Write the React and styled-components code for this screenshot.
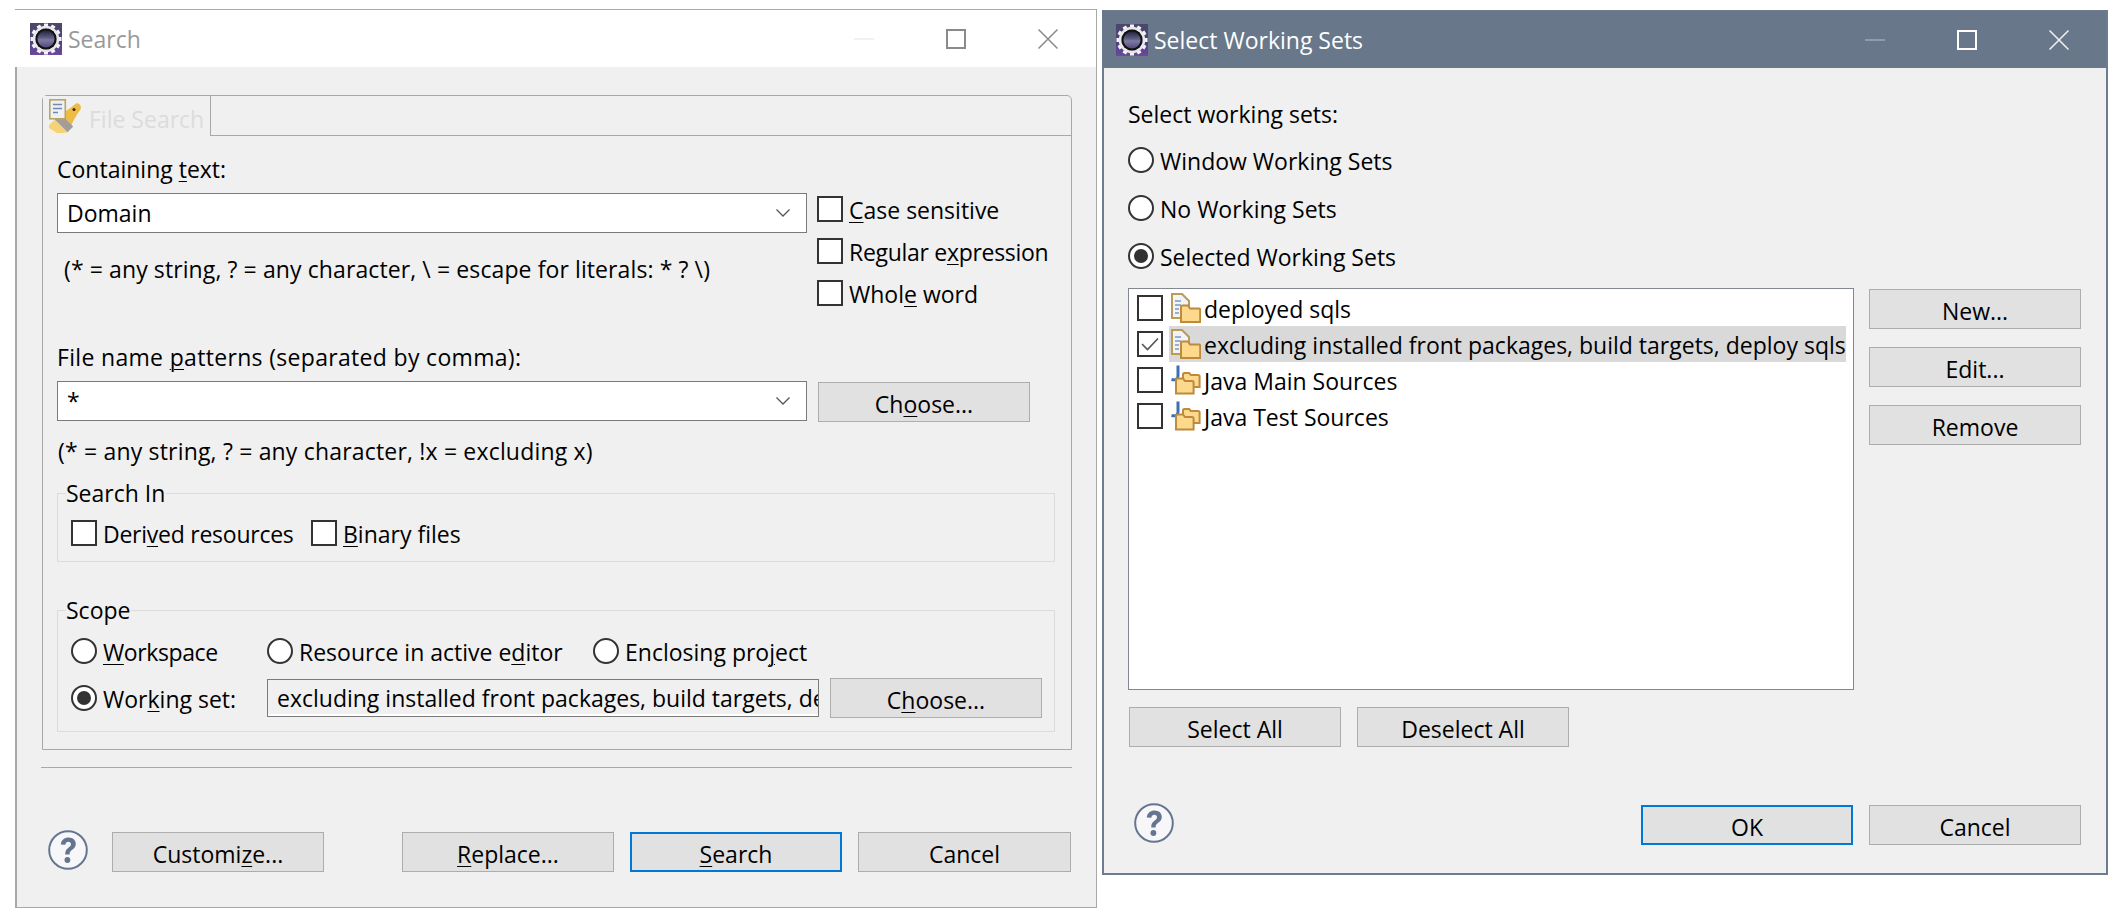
import React from "react";
import styled, { createGlobalStyle, css } from "styled-components";

const Global = createGlobalStyle`
  html, body { margin: 0; padding: 0; background: #fff; }
  body { font-family: "Open Sans", "Noto Sans", "Liberation Sans", sans-serif; font-size: 23px; color: #000; }
`;

const Page = styled.div`
  display: flex;
  align-items: flex-start;
  gap: 5px;
  padding: 9px 0 0 15px;
  width: 2114px;
  height: 924px;
  box-sizing: border-box;
  overflow: hidden;
`;

const Dialog = styled.div`
  background: #f0f0f0;
  box-sizing: border-box;
  width: ${(p) => p.$w}px;
  height: ${(p) => p.$h}px;
  margin-top: ${(p) => p.$top || 0}px;
  border: ${(p) => (p.$active ? "2px solid #6e7c8f" : "1px solid #a8a8a8")};
  border-left-width: 2px;
  border-top-width: 1px;
  display: flex;
  flex-direction: column;
`;

const TitleBar = styled.div`
  height: 57px;
  flex: none;
  display: flex;
  align-items: center;
  padding-right: ${(p) => (p.$active ? 37 : 38)}px;
  padding-left: ${(p) => (p.$active ? 14 : 15)}px;
  margin-left: -2px;
  background: ${(p) => (p.$active ? "#68778a" : "#fff")};
  color: ${(p) => (p.$active ? "#fff" : "#999")};
`;

const TitleText = styled.div`
  margin-left: 6px;
  flex: 1;
  line-height: 32px;
`;

const WinControls = styled.div`
  display: grid;
  grid-template-columns: 20px 20px 20px;
  column-gap: 72px;
  align-items: center;
`;

const Body = styled.div`
  flex: 1;
  display: flex;
  flex-direction: column;
  padding-left: ${(p) => p.$pl}px;
  padding-top: ${(p) => p.$pt || 0}px;
`;

const Folder = styled.div`
  width: 1030px;
  box-sizing: border-box;
  border: 1px solid #a8a8a8;
  border-radius: 5px 5px 0 0;
  margin-top: 28px;
`;

const TabStrip = styled.div`
  height: 39px;
  border-bottom: 1px solid #a8a8a8;
  display: flex;
`;

const Tab = styled.div`
  width: 168px;
  height: 40px;
  box-sizing: border-box;
  background: #f0f0f0;
  border-right: 1px solid #a8a8a8;
  display: flex;
  align-items: center;
  padding-left: 6px;
  gap: 8px;
  color: #dcdcdc;
  white-space: nowrap;
  overflow: hidden;
`;

const TabLabel = styled.span`
  padding-top: 5px;
  line-height: 32px;
`;

const TabBody = styled.div`
  padding: 17px 0 17px 14px;
`;

const TextLabel = styled.div`
  height: 32px;
  line-height: 32px;
  white-space: nowrap;
  letter-spacing: ${(p) => p.$ls || 0}px;
  margin-top: ${(p) => p.$mt || 0}px;
  padding-left: ${(p) => p.$pl || 0}px;
`;

const M = styled.span`
  text-decoration: underline;
  text-underline-offset: 3px;
  text-decoration-thickness: 1px;
`;

const TopRow = styled.div`
  display: flex;
  gap: 10px;
  margin-top: 8px;
`;

const LeftCol = styled.div`
  width: 750px;
`;

const CheckCol = styled.div`
  display: flex;
  flex-direction: column;
  gap: 16px;
  padding-top: 3px;
`;

const Combo = styled.div`
  box-sizing: border-box;
  width: 750px;
  height: 40px;
  flex: none;
  background: #fff;
  border: 1px solid #7a7a7a;
  display: flex;
  align-items: center;
  justify-content: space-between;
  padding: 0 16px 0 9px;
  line-height: 32px;
`;

const PatternRow = styled.div`
  display: flex;
  gap: 11px;
  margin-top: 8px;
`;

const Button = styled.div`
  box-sizing: border-box;
  width: ${(p) => p.$w || 212}px;
  height: 40px;
  flex: none;
  background: #e1e1e1;
  border: 1px solid #adadad;
  display: flex;
  align-items: center;
  justify-content: center;
  padding-top: 3px;
  line-height: 32px;
  margin-top: ${(p) => p.$mt || 0}px;
  ${(p) =>
    p.$default &&
    css`
      border: 2px solid #0078d7;
    `}
`;

const Group = styled.fieldset`
  width: 998px;
  box-sizing: border-box;
  margin: ${(p) => p.$mt}px 0 0 0;
  padding: 0;
  min-width: 0;
  border: 1px solid #dcdcdc;
`;

const GroupTitle = styled.legend`
  margin-left: 8px;
  padding: 0 1px 0 0;
  height: 32px;
  line-height: 32px;
`;

const GroupRow = styled.div`
  display: grid;
  align-items: center;
  grid-template-columns: ${(p) => p.$cols};
  column-gap: ${(p) => p.$gap || 0}px;
  padding: ${(p) => p.$pad};
`;

const Option = styled.div`
  display: flex;
  align-items: center;
  height: 26px;
  gap: 6px;
  white-space: nowrap;
`;

const OptionText = styled.span`
  padding-top: 2px;
  line-height: 32px;
  letter-spacing: ${(p) => p.$ls || 0}px;
`;

const Box = styled.span`
  box-sizing: border-box;
  width: 26px;
  height: 26px;
  flex: none;
  background: #fff;
  border: 2px solid #333;
  display: flex;
  align-items: center;
  justify-content: center;
`;

const Radio = styled.span`
  box-sizing: border-box;
  width: 26px;
  height: 26px;
  flex: none;
  background: #fff;
  border: 2px solid #333;
  border-radius: 50%;
  display: flex;
  align-items: center;
  justify-content: center;
  &::after {
    content: "";
    display: ${(p) => (p.$on ? "block" : "none")};
    width: 14px;
    height: 14px;
    border-radius: 50%;
    background: #333;
  }
`;

const ReadOnlyField = styled.div`
  box-sizing: border-box;
  width: 552px;
  height: 38px;
  background: #f0f0f0;
  border: 1px solid #7a7a7a;
  box-shadow: inset 0 -2px 0 #fff;
  padding-left: 9px;
  overflow: hidden;
  white-space: nowrap;
  line-height: 37px;
`;

const Separator = styled.div`
  width: 1031px;
  margin: 17px 0 0 -1px;
  border-top: 1px solid #a8a8a8;
`;

const Footer = styled.div`
  width: ${(p) => p.$w}px;
  margin-top: ${(p) => p.$mt}px;
  margin-left: ${(p) => p.$ml || 0}px;
  display: flex;
  justify-content: space-between;
`;

const ButtonGroup = styled.div`
  display: flex;
  gap: ${(p) => p.$gap}px;
  align-items: flex-start;
  margin-top: ${(p) => p.$mt || 0}px;
  margin-left: ${(p) => p.$ml || 0}px;
`;

const HelpButton = styled.div`
  width: 40px;
  height: 40px;
  margin-left: ${(p) => p.$ml || 0}px;
`;

const RadioStack = styled.div`
  display: flex;
  flex-direction: column;
  gap: 22px;
  margin-top: 17px;
`;

const SetsRow = styled.div`
  display: flex;
  gap: 15px;
  margin-top: 19px;
`;

const SetList = styled.div`
  box-sizing: border-box;
  width: 726px;
  height: 402px;
  background: #fff;
  border: 1px solid #828790;
  padding: 1px 7px 0 8px;
`;

const SetRow = styled.div`
  display: flex;
  align-items: center;
  height: 36px;
  gap: 6px;
`;

const SetCell = styled.div`
  flex: 1;
  height: 36px;
  display: flex;
  align-items: center;
  gap: 3px;
  padding-left: 2px;
  background: ${(p) => (p.$selected ? "#d9d9d9" : "transparent")};
  white-space: nowrap;
`;

const SideButtons = styled.div`
  display: flex;
  flex-direction: column;
  gap: 18px;
  margin-top: 1px;
`;

function EclipseIcon({ id }) {
  const teeth = [0, 30, 60, 90, 120, 150, 180, 210, 240, 270, 300, 330];
  return (
    <svg width="32" height="32" viewBox="0 0 32 32" style={{ flex: "none" }}>
      <defs>
        <linearGradient id={`ecl${id}`} x1="0" y1="0" x2="0" y2="1">
          <stop offset="0" stopColor="#4a4868" />
          <stop offset="0.6" stopColor="#514080" />
          <stop offset="1" stopColor="#6a4a9e" />
        </linearGradient>
        <linearGradient id={`eclc${id}`} x1="0" y1="0" x2="0" y2="1">
          <stop offset="0" stopColor="#23233a" />
          <stop offset="0.45" stopColor="#60608a" />
          <stop offset="0.55" stopColor="#7c7c9e" />
          <stop offset="1" stopColor="#54487e" />
        </linearGradient>
      </defs>
      <rect width="32" height="32" fill={`url(#ecl${id})`} />
      {teeth.map((a) => (
        <rect key={a} x="14" y="0.5" width="4" height="5" fill="#f4f4f4" transform={`rotate(${a} 16 16)`} />
      ))}
      <circle cx="16" cy="16" r="12" fill="none" stroke="#e8e8e8" strokeWidth="2.5" />
      <circle cx="16" cy="16" r="10.5" fill="#111" />
      <circle cx="16" cy="16" r="8.5" fill={`url(#eclc${id})`} />
    </svg>
  );
}

function Minimize({ color }) {
  return (
    <svg width="20" height="20" viewBox="0 0 20 20">
      <rect x="0" y="9" width="20" height="2" fill={color} />
    </svg>
  );
}

function Maximize({ color }) {
  return (
    <svg width="20" height="20" viewBox="0 0 20 20">
      <rect x="1" y="1" width="18" height="18" fill="none" stroke={color} strokeWidth="2" />
    </svg>
  );
}

function CloseX({ color }) {
  return (
    <svg width="20" height="20" viewBox="0 0 20 20">
      <path d="M0.5 0.5 L19.5 19.5 M19.5 0.5 L0.5 19.5" stroke={color} strokeWidth="1.5" fill="none" />
    </svg>
  );
}

function Chevron() {
  return (
    <svg width="14" height="8" viewBox="0 0 14 8">
      <path d="M0.5 0.5 L7 7 L13.5 0.5" stroke="#555" strokeWidth="1.3" fill="none" />
    </svg>
  );
}

function CheckMark() {
  return (
    <svg width="20" height="16" viewBox="0 0 20 16">
      <path d="M2 8 L7.5 13.5 L18 2.5" stroke="#555" strokeWidth="1.6" fill="none" />
    </svg>
  );
}

function HelpIcon() {
  return (
    <svg width="40" height="40" viewBox="0 0 40 40">
      <circle cx="20" cy="20" r="18.8" fill="#f7f7f9" stroke="#65758f" strokeWidth="2" />
      <path
        d="M12.8 14.5 C13.3 9.8 16.6 7.6 20.5 7.6 C25 7.6 27.8 10.4 27.8 14 C27.8 17.2 25.8 18.7 23.6 20.3 C22.2 21.4 21.6 22.2 21.6 24.6 L17.2 24.6 C17.2 21.2 18.1 19.6 20.1 18 C21.9 16.6 23 15.8 23 14.2 C23 12.8 22 11.8 20.3 11.8 C18.7 11.8 17.6 12.9 17.3 14.8 Z"
        fill="#65758f"
      />
      <circle cx="19.4" cy="30" r="2.9" fill="#65758f" />
    </svg>
  );
}

function FileSearchIcon() {
  return (
    <svg width="32" height="34" viewBox="0 0 32 34" style={{ flex: "none" }}>
      <path d="M6 20.4 L0 26 L0 34 L14 34 L18.6 33.2 Z" fill="#f3d27a" />
      <path d="M0 29 L0 34 L8 34 Z" fill="#fbf0cf" />
      <path d="M11 15 C18 12 24 7 27 4.5 C30 3.5 33 7 31.5 10.5 C29 14 25 20 22.5 26 Z" fill="#eebc45" />
      <path d="M5.8 20.4 L11.4 14.8 L24.2 27.6 L18.6 33.2 Z" fill="#a39d95" />
      <circle cx="25" cy="10.5" r="1.5" fill="#3a2a05" />
      <rect x="0.8" y="0.8" width="15.5" height="19" fill="#eef0f4" stroke="#b8a562" strokeWidth="1.6" />
      <path d="M4 5.5 H13 M4 9.5 H13 M4 13.5 H9" stroke="#6f8ab8" strokeWidth="1.6" />
    </svg>
  );
}

function WorkingSetIcon() {
  return (
    <svg width="30" height="30" viewBox="0 0 30 30" style={{ flex: "none" }}>
      <path d="M1 1 H11 L18 8 V25 H1 Z" fill="#f1f3f6" stroke="#b99c58" strokeWidth="2" />
      <path d="M4 8 H10 M4 12 H10 M4 16 H8 M4 20 H8" stroke="#7d98c4" strokeWidth="1.6" />
      <path d="M10 29 V14 C10 13 10.5 12.5 11.5 12.5 H17 L19 15.5 H28 C28.7 15.5 29.2 16 29.2 17 V29 Z" fill="#fcd98c" stroke="#bd8a3e" strokeWidth="2" />
    </svg>
  );
}

function JavaSetIcon() {
  return (
    <svg width="30" height="30" viewBox="0 0 30 30" style={{ flex: "none" }}>
      <path d="M7 0.5 V11 C7 14.5 4.5 15.5 0.5 14.5" stroke="#3f6fb0" strokeWidth="3" fill="none" />
      <path d="M12 16 V9.5 C12 8.5 12.5 8 13.5 8 H18 L20 10 H27 C28 10 28.6 10.6 28.6 11.6 V22 H23" fill="#fcd98c" stroke="#bd8a3e" strokeWidth="2" />
      <path d="M5 28.5 V15 C5 14 5.5 13.5 6.5 13.5 H12 L14 16 H21 C22 16 22.6 16.6 22.6 17.6 V28.5 Z" fill="#fcd98c" stroke="#bd8a3e" strokeWidth="2" />
    </svg>
  );
}

const sets = [
  { name: "deployed sqls", icon: <WorkingSetIcon /> },
  { name: "excluding installed front packages, build targets, deploy sqls", icon: <WorkingSetIcon />, selected: true },
  { name: "Java Main Sources", icon: <JavaSetIcon /> },
  { name: "Java Test Sources", icon: <JavaSetIcon /> },
];

function SearchDialog() {
  return (
    <Dialog $w={1082} $h={899}>
      <TitleBar>
        <EclipseIcon id="a" />
        <TitleText>Search</TitleText>
        <WinControls>
          <Minimize color="#f2f2f2" />
          <Maximize color="#8a8a8a" />
          <CloseX color="#8a8a8a" />
        </WinControls>
      </TitleBar>
      <Body $pl={25}>
        <Folder>
          <TabStrip>
            <Tab>
              <FileSearchIcon />
              <TabLabel>File Search</TabLabel>
            </Tab>
          </TabStrip>
          <TabBody>
            <TextLabel>
              Containing <M>t</M>ext:
            </TextLabel>
            <TopRow>
              <LeftCol>
                <Combo>
                  Domain
                  <Chevron />
                </Combo>
                <TextLabel $mt={20} $pl={7} $ls={0.1}>
                  {"(* = any string, ? = any character, \\ = escape for literals: * ? \\)"}
                </TextLabel>
              </LeftCol>
              <CheckCol>
                <Option>
                  <Box />
                  <OptionText>
                    <M>C</M>ase sensitive
                  </OptionText>
                </Option>
                <Option>
                  <Box />
                  <OptionText $ls={-0.3}>
                    Regular e<M>x</M>pression
                  </OptionText>
                </Option>
                <Option>
                  <Box />
                  <OptionText>
                    Whol<M>e</M> word
                  </OptionText>
                </Option>
              </CheckCol>
            </TopRow>
            <TextLabel $mt={35} $ls={0.32}>
              File name <M>p</M>atterns (separated by comma):
            </TextLabel>
            <PatternRow>
              <Combo>
                *
                <Chevron />
              </Combo>
              <Button $mt={1}>
                <span>
                  Ch<M>o</M>ose...
                </span>
              </Button>
            </PatternRow>
            <TextLabel $mt={13} $pl={1} $ls={0.18}>
              (* = any string, ? = any character, !x = excluding x)
            </TextLabel>
            <Group $mt={10}>
              <GroupTitle>Search In</GroupTitle>
              <GroupRow $cols="240px auto" $pad="11px 0 15px 13px">
                <Option>
                  <Box />
                  <OptionText $ls={-0.25}>
                    Deri<M>v</M>ed resources
                  </OptionText>
                </Option>
                <Option>
                  <Box />
                  <OptionText>
                    <M>B</M>inary files
                  </OptionText>
                </Option>
              </GroupRow>
            </Group>
            <Group $mt={32}>
              <GroupTitle>Scope</GroupTitle>
              <GroupRow $cols="196px 326px auto" $pad="12px 0 0 13px">
                <Option>
                  <Radio />
                  <OptionText $ls={-0.4}>
                    <M>W</M>orkspace
                  </OptionText>
                </Option>
                <Option>
                  <Radio />
                  <OptionText>
                    Resource in active e<M>d</M>itor
                  </OptionText>
                </Option>
                <Option>
                  <Radio />
                  <OptionText>
                    Enclosing pro<M>j</M>ect
                  </OptionText>
                </Option>
              </GroupRow>
              <GroupRow $cols="185px 552px 212px" $gap={11} $pad="14px 0 13px 13px">
                <Option>
                  <Radio $on />
                  <OptionText>
                    Wor<M>k</M>ing set:
                  </OptionText>
                </Option>
                <ReadOnlyField>excluding installed front packages, build targets, deploy sqls</ReadOnlyField>
                <Button>
                  <span>
                    C<M>h</M>oose...
                  </span>
                </Button>
              </GroupRow>
            </Group>
          </TabBody>
        </Folder>
        <Separator />
        <Footer $w={1029} $mt={62}>
          <ButtonGroup $gap={24}>
            <HelpButton $ml={6}>
              <HelpIcon />
            </HelpButton>
            <Button $mt={2}>
              <span>
                Customi<M>z</M>e...
              </span>
            </Button>
          </ButtonGroup>
          <ButtonGroup $gap={16} $mt={2}>
            <Button>
              <span>
                <M>R</M>eplace...
              </span>
            </Button>
            <Button $default>
              <span>
                <M>S</M>earch
              </span>
            </Button>
            <Button $w={213}>Cancel</Button>
          </ButtonGroup>
        </Footer>
      </Body>
    </Dialog>
  );
}

function WorkingSetsDialog() {
  return (
    <Dialog $w={1006} $h={865} $top={1} $active>
      <TitleBar $active>
        <EclipseIcon id="b" />
        <TitleText>Select Working Sets</TitleText>
        <WinControls>
          <Minimize color="#8f9cad" />
          <Maximize color="#fff" />
          <CloseX color="#f2f2f2" />
        </WinControls>
      </TitleBar>
      <Body $pl={24} $pt={30}>
        <TextLabel>Select working sets:</TextLabel>
        <RadioStack>
          <Option>
            <Radio />
            <OptionText>Window Working Sets</OptionText>
          </Option>
          <Option>
            <Radio />
            <OptionText>No Working Sets</OptionText>
          </Option>
          <Option>
            <Radio $on />
            <OptionText>Selected Working Sets</OptionText>
          </Option>
        </RadioStack>
        <SetsRow>
          <SetList>
            {sets.map((s) => (
              <SetRow key={s.name}>
                <Box>{s.selected && <CheckMark />}</Box>
                <SetCell $selected={s.selected}>
                  {s.icon}
                  <OptionText>{s.name}</OptionText>
                </SetCell>
              </SetRow>
            ))}
          </SetList>
          <SideButtons>
            <Button>New...</Button>
            <Button>Edit...</Button>
            <Button>Remove</Button>
          </SideButtons>
        </SetsRow>
        <ButtonGroup $gap={16} $mt={17} $ml={1}>
          <Button>Select All</Button>
          <Button>Deselect All</Button>
        </ButtonGroup>
        <Footer $w={947} $mt={56} $ml={6}>
          <HelpButton>
            <HelpIcon />
          </HelpButton>
          <ButtonGroup $gap={16} $mt={2}>
            <Button $default>OK</Button>
            <Button>Cancel</Button>
          </ButtonGroup>
        </Footer>
      </Body>
    </Dialog>
  );
}

export default function App() {
  return (
    <>
      <Global />
      <Page>
        <SearchDialog />
        <WorkingSetsDialog />
      </Page>
    </>
  );
}
